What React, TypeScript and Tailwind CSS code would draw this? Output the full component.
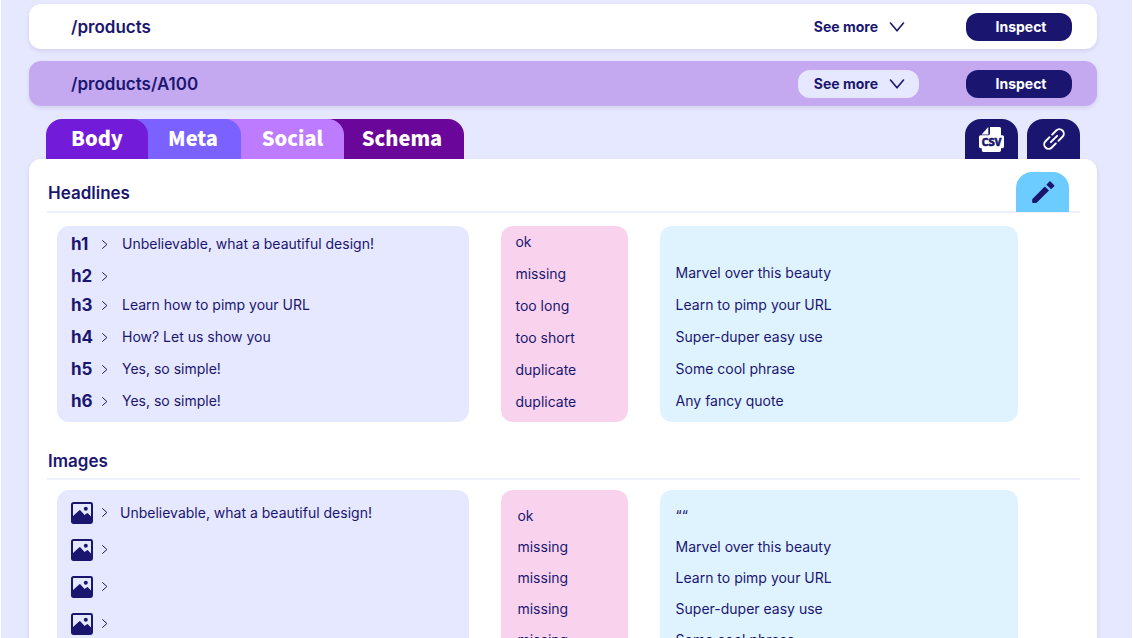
import React from "react";

const headlines = [
  { tag: "h1", text: "Unbelievable, what a beautiful design!" },
  { tag: "h2", text: "" },
  { tag: "h3", text: "Learn how to pimp your URL" },
  { tag: "h4", text: "How? Let us show you" },
  { tag: "h5", text: "Yes, so simple!" },
  { tag: "h6", text: "Yes, so simple!" },
];
const headlineStatus = ["ok", "missing", "too long", "too short", "duplicate", "duplicate"];
const phrases = [
  "Marvel over this beauty",
  "Learn to pimp your URL",
  "Super-duper easy use",
  "Some cool phrase",
  "Any fancy quote",
];
const images = ["Unbelievable, what a beautiful design!", "", "", "", ""];
const imageStatus = ["ok", "missing", "missing", "missing", "missing", "missing"];

function ChevronDown() {
  return (
    <svg width="16" height="10" viewBox="0 0 16 10" fill="none" stroke="currentColor" strokeWidth="1.6" strokeLinecap="round" strokeLinejoin="round" aria-hidden="true">
      <path d="M1.5 1 8 8.8 14.5 1" />
    </svg>
  );
}

function ChevronRight() {
  return (
    <svg className="shrink-0" width="7" height="9" viewBox="0 0 7 9" fill="none" stroke="currentColor" strokeWidth="1" strokeLinecap="round" strokeLinejoin="round" aria-hidden="true">
      <path d="M1.6.6 5.9 4.5 1.6 8.4" />
    </svg>
  );
}

function ImageIcon() {
  return (
    <svg className="shrink-0" width="22" height="22" viewBox="0 0 22 22" aria-hidden="true">
      <rect x="1" y="1" width="20" height="20" rx="1.4" fill="none" stroke="currentColor" strokeWidth="2" />
      <path d="M1.5 14.4 8.1 8.4 Q8.8 7.8 9.5 8.4 L13.6 13 15.6 11.4 Q16.4 10.8 17.1 11.5 L20.5 15 V20.5 H1.5Z" fill="currentColor" />
      <circle cx="14.8" cy="6.7" r="2" fill="currentColor" />
    </svg>
  );
}

function CsvIcon() {
  return (
    <svg width="25" height="25" viewBox="0 0 25 25" fill="white" aria-hidden="true">
      <path d="M9.3 0V7.4H2.6Z" />
      <path d="M11 0H20.5Q22 0 22 1.5V8.2H23.4Q25 8.2 25 9.8V19.6Q25 21.2 23.4 21.2H22V23.3Q22 25 20.3 25H4.4Q2.8 25 2.8 23.3V21.2H1.6Q0 21.2 0 19.6V9.8Q0 8.2 1.6 8.2H9.4Q11 8.2 11 6.6Z" />
      <text x="12.5" y="19" textAnchor="middle" fill="#1a1670" stroke="#1a1670" strokeWidth=".7" fontSize="10.5" fontWeight="700" fontFamily="Noto Sans CJK SC, sans-serif">CSV</text>
    </svg>
  );
}

function LinkIcon() {
  return (
    <svg width="24" height="24" viewBox="0 0 26 26" fill="none" stroke="white" strokeWidth="2.1" strokeLinecap="round" aria-hidden="true">
      <g transform="rotate(-45 13 13)">
        <path d="M11 8.2H4.8A4.8 4.8 0 0 0 4.8 17.8H11" />
        <path d="M15 8.2H21.2A4.8 4.8 0 0 1 21.2 17.8H15" />
        <path d="M8.2 13H17.8" />
      </g>
    </svg>
  );
}

function PencilIcon() {
  return (
    <svg width="24" height="24" viewBox="0 0 24 24" fill="currentColor" aria-hidden="true">
      <path d="M1.2 19.2 13.8 6.6 18 10.6 5.4 23H2Q1.2 23 1.2 22.2Z" />
      <path d="M15.4 4.8 18.4 1.6Q18.9 1.1 19.5 1.6L23.2 5.2Q23.7 5.7 23.2 6.3L20.1 9.3Z" />
    </svg>
  );
}

function UrlRow({ path, active = false }: { path: string; active?: boolean }) {
  return (
    <div
      className={
        active
          ? "flex h-[45px] items-center rounded-xl bg-[#c4a9f0] pr-[25px] pl-[42px] shadow-[0_2px_4px_rgba(26,22,112,0.1)]"
          : "flex h-[45px] items-center rounded-xl bg-white pr-[25px] pl-[42px] shadow-[0_2px_4px_rgba(26,22,112,0.1)]"
      }
    >
      <h2 className="grow text-[17px] leading-6 font-semibold">{path}</h2>
      <button
        type="button"
        className={
          active
            ? "mr-[47px] flex h-7 items-center gap-[11px] rounded-xl bg-[#e6e8ff] pr-3.5 pl-4 text-sm font-bold"
            : "mr-[47px] flex h-7 items-center gap-[11px] rounded-xl pr-3.5 pl-4 text-sm font-bold"
        }
      >
        See more
        <ChevronDown />
      </button>
      <button type="button" className="h-7 w-[106px] rounded-xl bg-[#1a1670] pl-1 text-sm font-bold text-white">
        Inspect
      </button>
    </div>
  );
}

function SectionTitle({ children }: { children: React.ReactNode }) {
  return <h3 className="text-[17px] leading-6 font-semibold">{children}</h3>;
}

export default function App() {
  return (
    <div className="h-screen overflow-hidden bg-white px-px font-['Inter',sans-serif] text-sm leading-5 text-[#1a1670]">
      <main className="h-full bg-[#e6e8ff] pt-1 pr-[35px] pl-7">
        <div className="flex flex-col gap-3">
          <UrlRow path="/products" />
          <UrlRow path="/products/A100" active />
        </div>

        <div className="mt-[13px] flex items-end justify-between pr-[17px] pl-[17px]">
          <nav className="flex font-['Noto_Sans_CJK_SC',sans-serif] text-xl leading-6 font-black text-white" aria-label="Sections">
            <a href="#body" className="z-30 flex h-10 w-[102px] items-center justify-center rounded-t-2xl bg-[#721cda] pb-0.5">Body</a>
            <a href="#meta" className="z-20 -ml-4 flex h-10 w-[109px] items-center justify-center rounded-tr-2xl bg-[#7b61ff] pb-0.5 pl-[13px]">Meta</a>
            <a href="#social" className="z-10 -ml-4 flex h-10 w-[119px] items-center justify-center rounded-tr-2xl bg-[#bd7bff] pb-0.5 pl-4">Social</a>
            <a href="#schema" className="-ml-4 flex h-10 w-[136px] items-center justify-center rounded-tr-2xl bg-[#6a0699] pb-0.5 pl-3">Schema</a>
          </nav>
          <div className="flex gap-[9px]">
            <button type="button" aria-label="Export CSV" className="flex h-10 w-[53px] items-center justify-center rounded-t-2xl bg-[#1a1670]">
              <CsvIcon />
            </button>
            <button type="button" aria-label="Copy link" className="flex h-10 w-[53px] items-center justify-center rounded-t-2xl bg-[#1a1670]">
              <LinkIcon />
            </button>
          </div>
        </div>

        <div className="h-full rounded-t-xl bg-white pt-[13px] pr-[17px] pl-[18px] shadow-[0_2px_4px_rgba(26,22,112,0.1)]">
          <section>
            <header className="flex h-[41px] items-start justify-between border-b-2 border-[#eef0ff] pr-[11px] pl-px">
              <div className="pt-[9px]">
                <SectionTitle>Headlines</SectionTitle>
              </div>
              <button type="button" aria-label="Edit headlines" className="flex h-10 w-[53px] items-center justify-center rounded-t-2xl bg-[#6cccff]">
                <PencilIcon />
              </button>
            </header>
            <div className="mt-[13px] mr-[62px] ml-2.5 grid grid-cols-[412fr_126fr_358fr] gap-8">
              <ul className="h-[196px] rounded-xl bg-[#e6e8ff] pt-2 pl-3.5">
                {headlines.map((row) => (
                  <li key={row.tag} className={row.text ? "flex h-8 items-start" : "flex h-[29px] items-start"}>
                    <span className="w-[30px] text-[17px] font-bold">{row.tag}</span>
                    <span className="flex h-5 w-[21px] items-center">
                      <ChevronRight />
                    </span>
                    <span>{row.text}</span>
                  </li>
                ))}
              </ul>
              <ul className="rounded-xl bg-[#f9d3ee] pl-3.5">
                {headlineStatus.map((status, i) => (
                  <li key={i} className="flex h-8 items-center">{status}</li>
                ))}
              </ul>
              <ul className="rounded-xl bg-[#dff3ff] pt-[31px] pl-4">
                {phrases.map((phrase) => (
                  <li key={phrase} className="flex h-8 items-center">{phrase}</li>
                ))}
              </ul>
            </div>
          </section>

          <section className="mt-[27px]">
            <header className="h-[31px] border-b-2 border-[#eef0ff] pl-px">
              <SectionTitle>Images</SectionTitle>
            </header>
            <div className="mt-2.5 mr-[62px] ml-2.5 grid grid-cols-[412fr_126fr_358fr] gap-8">
              <ul className="rounded-xl bg-[#e6e8ff] pt-1 pb-2 pl-3.5">
                {images.map((text, i) => (
                  <li key={i} className="flex h-[37px] items-center">
                    <span className="w-[30px]">
                      <ImageIcon />
                    </span>
                    <span className="w-[19px]">
                      <ChevronRight />
                    </span>
                    <span>{text}</span>
                  </li>
                ))}
              </ul>
              <ul className="rounded-xl bg-[#f9d3ee] pt-2.5 pl-4">
                {imageStatus.map((status, i) => (
                  <li key={i} className="flex h-[31px] items-center">{status}</li>
                ))}
              </ul>
              <ul className="rounded-xl bg-[#dff3ff] pt-2.5 pl-4">
                {["““", ...phrases].map((phrase) => (
                  <li key={phrase} className="flex h-[31px] items-center">{phrase}</li>
                ))}
              </ul>
            </div>
          </section>
        </div>
      </main>
    </div>
  );
}
